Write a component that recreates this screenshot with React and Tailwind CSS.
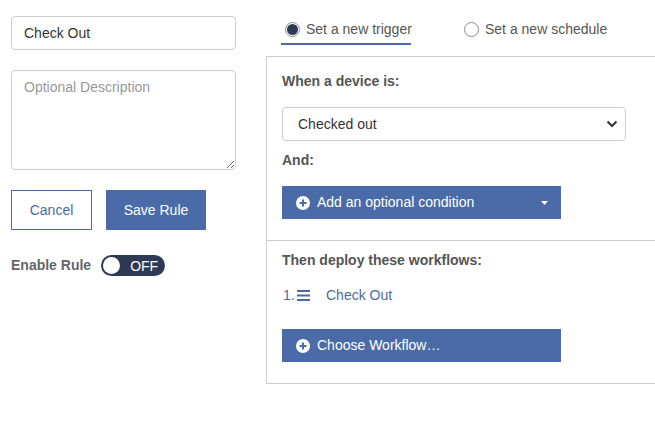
import React, { useState } from "react";

function PlusCircle() {
  return (
    <svg width="14" height="14" viewBox="0 0 14 14" className="shrink-0">
      <circle cx="7" cy="7" r="7" fill="#fff" />
      <path d="M7 3.5v7M3.5 7h7" stroke="#4a6ba7" strokeWidth="2" />
    </svg>
  );
}

function Radio({ checked }) {
  return (
    <span className="w-[15px] h-[15px] rounded-full border border-[#8a8a8a] flex items-center justify-center shrink-0 bg-white">
      {checked && <span className="w-[11px] h-[11px] rounded-full bg-[#2c3a53]" />}
    </span>
  );
}

export default function App() {
  const [name, setName] = useState("Check Out");
  const [tab, setTab] = useState("trigger");
  const [enabled, setEnabled] = useState(false);

  return (
    <div className="w-[655px] h-[431px] overflow-hidden bg-white flex text-[14px] text-[#333] font-[Liberation_Sans,Arial,sans-serif]">
      {/* rule name + actions */}
      <div className="w-[255px] shrink-0 pl-[11px] pt-[16px]">
        <input
          className="w-[225px] h-[34px] border border-[#ccc] rounded-[4px] px-[12px] text-[14px] text-[#333] outline-none"
          value={name}
          onChange={(e) => setName(e.target.value)}
        />
        <textarea
          className="block w-[225px] h-[100px] mt-[20px] border border-[#ccc] rounded-[4px] px-[12px] py-[6px] text-[14px] text-[#333] placeholder:text-[#999] outline-none"
          placeholder="Optional Description"
        />
        <div className="flex gap-[14px] mt-[20px]">
          <button className="w-[81px] h-[40px] border border-[#4a6ba7] text-[#4a6ba7] bg-white">
            Cancel
          </button>
          <button className="w-[100px] h-[40px] bg-[#4a6ba7] text-white">Save Rule</button>
        </div>
        <div className="flex items-center mt-[25px]">
          <span className="font-bold text-[#666] mr-[10px]">Enable Rule</span>
          <button
            onClick={() => setEnabled(!enabled)}
            className="w-[64px] h-[21px] rounded-full bg-[#2c3a53] flex items-center px-[2px]"
          >
            <span className="w-[17px] h-[17px] rounded-full bg-white" />
            <span className="ml-[10px] text-white text-[14px] leading-none">
              {enabled ? "ON" : "OFF"}
            </span>
          </button>
        </div>
      </div>

      {/* trigger / schedule panel */}
      <div className="pl-[11px] shrink-0">
        <div className="flex pl-[15px] pt-[16px] mb-[11px]">
          <button
            onClick={() => setTab("trigger")}
            className={`w-[130px] h-[29px] flex items-center gap-[6px] pl-[4px] whitespace-nowrap text-[#555] border-b-2 ${
              tab === "trigger" ? "border-[#4a6ba7]" : "border-transparent"
            }`}
          >
            <Radio checked={tab === "trigger"} />
            Set a new trigger
          </button>
          <button
            onClick={() => setTab("schedule")}
            className={`ml-[53px] h-[29px] flex items-center gap-[6px] whitespace-nowrap text-[#555] border-b-2 ${
              tab === "schedule" ? "border-[#4a6ba7]" : "border-transparent"
            }`}
          >
            <Radio checked={tab === "schedule"} />
            Set a new schedule
          </button>
        </div>

        <div className="w-[420px] border border-[#ccc]">
          <div className="pl-[15px] pt-[14px] pb-[21px] border-b border-[#ccc]">
            <div className="font-bold text-[#555] leading-[20px]">When a device is:</div>
            <div className="relative w-[344px] mt-[16px]">
              <select className="w-full h-[34px] appearance-none border border-[#ccc] rounded-[4px] pl-[15px] text-[14px] text-[#333] bg-white outline-none">
                <option>Checked out</option>
                <option>Checked in</option>
              </select>
              <svg
                width="12"
                height="8"
                viewBox="0 0 12 8"
                className="absolute right-[8px] top-[13px] pointer-events-none"
              >
                <path d="M1.5 1.5l4.5 4.5 4.5-4.5" fill="none" stroke="#333" strokeWidth="2" />
              </svg>
            </div>
            <div className="font-bold text-[#555] leading-[20px] mt-[9px]">And:</div>
            <button className="w-[279px] h-[33px] mt-[16px] bg-[#4a6ba7] text-white flex items-center pl-[14px] pr-[13px]">
              <PlusCircle />
              <span className="ml-[7px]">Add an optional condition</span>
              <svg width="7" height="4" viewBox="0 0 7 4" className="ml-auto">
                <path d="M0 0h7L3.5 4z" fill="#fff" />
              </svg>
            </button>
          </div>

          <div className="pl-[15px] pt-[9px] pb-[21px]">
            <div className="font-bold text-[#555] leading-[20px]">Then deploy these workflows:</div>
            <div className="flex items-center mt-[15px] leading-[20px] text-[#4a6ba7]">
              <span className="w-[14px] pl-[1px]">1.</span>
              <svg width="14" height="11" viewBox="0 0 14 11" className="ml-[1px]">
                <path d="M0 1h13M0 5.5h13M0 10h13" stroke="#4a6ba7" strokeWidth="2" />
              </svg>
              <a className="ml-[15px] cursor-pointer">Check Out</a>
            </div>
            <button className="w-[279px] h-[33px] mt-[24px] bg-[#4a6ba7] text-white flex items-center pl-[14px]">
              <PlusCircle />
              <span className="ml-[7px]">Choose Workflow…</span>
            </button>
          </div>
        </div>
      </div>
    </div>
  );
}
